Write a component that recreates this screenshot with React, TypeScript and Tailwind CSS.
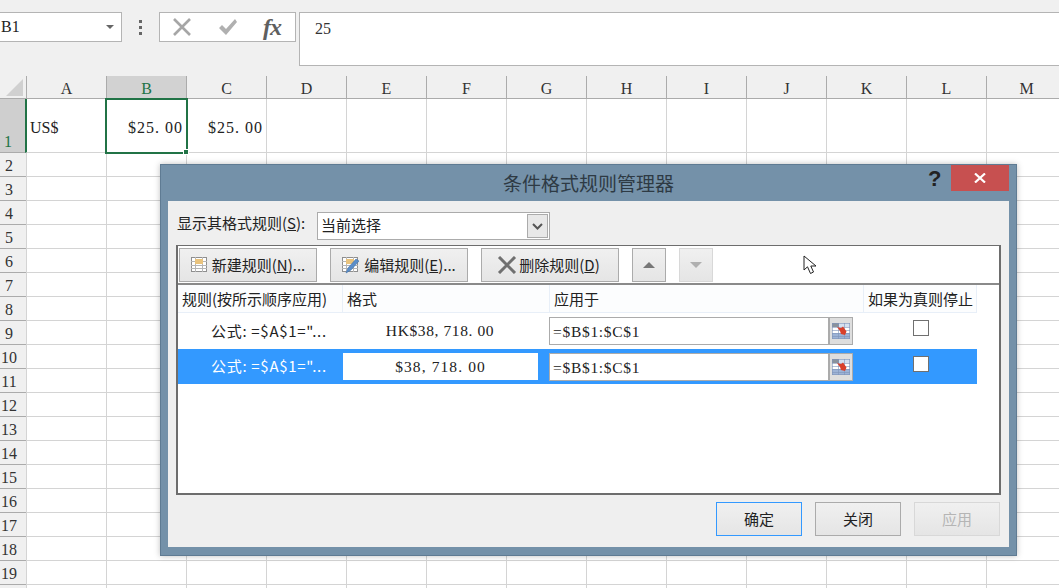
import React from "react";

const cols = ["A","B","C","D","E","F","G","H","I","J","K","L","M"];
const rows = Array.from({length: 19}, (_, i) => i + 2);
const cjk = "font-['Noto_Sans_CJK_SC','Noto_Sans',sans-serif]";
const serif = "font-['Liberation_Serif','Noto_Sans_CJK_SC',serif]";

function RangeIcon() {
  return (
    <svg width="18" height="16" viewBox="0 0 18 16">
      <rect x="0" y="0" width="18" height="16" fill="#fff" />
      <rect x="0" y="0" width="18" height="4" fill="#d4e0f0" />
      <rect x="0" y="0" width="7" height="4" fill="#8a929c" />
      <rect x="0" y="10" width="18" height="6" fill="#9db3d6" />
      <path d="M0 0.5H18M0 4.5H18M0 7.5H18M0 10.5H18M0 13.5H18M0 15.5H18M0.5 0V16M6.5 0V16M12.5 0V16M17.5 0V16" stroke="#8094b8" strokeWidth="0.6" />
      <path d="M5 4L9 5L11 3.5L13.5 7L14.5 8.5L13 12L9 11L8 8Z" fill="#d8402c" />
    </svg>
  );
}

function RuleIcon({ edit }: { edit?: boolean }) {
  return (
    <svg width="18" height="18" viewBox="0 0 18 18">
      <rect x="0.5" y="1.5" width="15" height="14" fill="#fff" stroke="#8f8f8f" />
      <path d="M0 5.5H16M0 9.5H16M0 12.5H16M4.5 1V16M11.5 1V16" stroke="#b5b5b5" />
      <rect x="4" y="3" width="8" height="5" fill="#e9c37d" />
      {edit && <path d="M4 17L6 12L14 3L17 5L9 14Z" fill="#5b8ec9" stroke="#3f6ea8" strokeWidth="0.6" />}
    </svg>
  );
}

function Btn({ className, children }: { className: string; children: React.ReactNode }) {
  return (
    <div className={`h-[34px] flex items-center justify-center border border-[#ababab] bg-gradient-to-b from-[#f0f0f0] to-[#e5e5e5] text-[15px] text-[#222] ${className}`}>
      {children}
    </div>
  );
}

function RangeField() {
  return (
    <div className="w-[304px] h-[28px] flex border border-[#ababab] bg-white">
      <div className={`flex-1 pl-[3px] text-[15.5px] tracking-[0.7px] leading-[27px] text-[#222] ${serif}`}>=$B$1:$C$1</div>
      <div className="w-[24px] h-[26px] bg-[#dedede] border-l-2 border-[#ababab] flex items-center justify-center">
        <RangeIcon />
      </div>
    </div>
  );
}

export default function App() {
  return (
    <div className={`relative w-[1059px] h-[588px] overflow-hidden bg-white ${cjk}`}>
      {/* formula bar */}
      <div className="h-[76px] bg-[#f0f0f0] flex items-start pt-[12px]">
        <div className="w-[123px] h-[30px] -ml-px bg-white border border-[#b4b4b4] flex items-center justify-between pr-[6px]">
          <span className={`text-[16px] pl-px text-[#222] ${serif}`}>B1</span>
          <span className="w-0 h-0 border-l-[4px] border-r-[4px] border-t-[4px] border-l-transparent border-r-transparent border-t-[#666] mr-[1px]" />
        </div>
        <div className="w-[37px] h-[30px] flex flex-col items-center justify-center gap-[3px]">
          <i className="w-[3px] h-[3px] bg-[#666]" />
          <i className="w-[3px] h-[3px] bg-[#666]" />
          <i className="w-[3px] h-[3px] bg-[#666]" />
        </div>
        <div className="w-[137px] h-[30px] bg-white border border-[#b4b4b4] flex items-center">
          <svg width="18" height="18" viewBox="0 0 18 18" className="ml-[13px]">
            <path d="M1 1L17 17M17 1L1 17" stroke="#a6a6a6" strokeWidth="2.6" />
          </svg>
          <svg width="20" height="18" viewBox="0 0 20 18" className="ml-[27px]">
            <path d="M1 10L4 7L8 11L17 1L19 4L8 17Z" fill="#b0b0b0" />
          </svg>
          <span className={`ml-[25px] text-[24px] leading-none font-bold italic tracking-[-1px] text-[#5f5f5f] ${serif}`}>fx</span>
        </div>
        <div className={`ml-[3px] flex-1 h-[54px] bg-white border border-[#b4b4b4] border-r-0 pl-[15px] pt-[4px] text-[16px] text-[#333] ${serif}`}>25</div>
      </div>

      {/* sheet */}
      <div className="w-[1066px] grid grid-cols-[26px_repeat(13,80px)] grid-rows-[23px_54px] auto-rows-[24px]">
        <div className="bg-[#f0f0f0] border-b border-[#ababab] relative overflow-hidden">
          <svg width="17" height="17" viewBox="0 0 17 17" className="absolute right-[3px] bottom-[2px]">
            <path d="M17 0V17H0Z" fill="#d0d0d0" />
          </svg>
        </div>
        {cols.map((c) => (
          <div
            key={c}
            className={`border-l border-b border-[#ababab] text-center text-[16px] leading-[25px] ${serif} ${c === "B" ? "bg-[#d2d2d2] text-[#217346]" : "bg-[#f0f0f0] text-[#333]"}`}
          >
            {c}
          </div>
        ))}

        <div className={`bg-[#cfcfcf] border-b border-[#ababab] text-[16px] pl-[4px] pt-[32px] leading-[22px] text-[#217346] ${serif}`}>1</div>
        {cols.map((c, i) => (
          <div
            key={c}
            className={`border-l border-b border-[#d4d4d4] text-[16px] tracking-[1px] leading-[57px] text-[#222] ${serif} ${i === 0 ? "border-l-2 border-l-[#217346] -ml-px pl-[3px] !tracking-normal" : "text-right pr-[3px]"}`}
          >
            {c === "A" ? "US$" : c === "B" || c === "C" ? "$25. 00" : ""}
          </div>
        ))}

        {rows.map((r) => (
          <React.Fragment key={r}>
            <div className={`bg-[#f0f0f0] border-b border-[#ababab] w-[26px] text-[16px] leading-[25px] text-[#333] pr-[8px] text-center ${serif}`}>{r <= 19 ? r : ""}</div>
            {cols.map((c) => (
              <div key={c} className="border-l border-b border-[#d4d4d4]" />
            ))}
          </React.Fragment>
        ))}
      </div>

      {/* selection */}
      <div className="absolute left-[105px] top-[98px] w-[83px] h-[56px] border-2 border-[#217346]" />
      <div className="absolute left-[183px] top-[149px] w-[6px] h-[6px] bg-[#217346] border border-white" />

      {/* dialog */}
      <div className="absolute left-[160px] top-[164px] w-[857px] h-[392px] bg-[#7491a9] border border-[#5f7b93] shadow-[0_0_6px_rgba(0,0,0,0.25)] flex flex-col">
        <div className="h-[36px] shrink-0 relative flex items-center justify-center">
          <span className="text-[19px] text-[#2e3a44] pt-px">条件格式规则管理器</span>
          <span className="absolute left-[767px] -top-[3px] text-[22px] font-bold text-[#222] font-['Liberation_Sans',sans-serif]">?</span>
          <div className="absolute left-[790px] top-0 w-[58px] h-[26px] bg-[#c75050] flex items-center justify-center">
            <svg width="12" height="10" viewBox="0 0 12 10">
              <path d="M1 0.5L11 9.5M11 0.5L1 9.5" stroke="#fff" strokeWidth="2.2" />
            </svg>
          </div>
        </div>

        <div className="mx-[7px] h-[346px] bg-[#efefef] flex flex-col pl-[8px] pr-[8px]">
          <div className="h-[44px] shrink-0 flex items-center pt-[6px]">
            <span className="w-[141px] mb-[6px] pl-px text-[15px] text-[#222] whitespace-nowrap">显示其格式规则(<u>S</u>):</span>
            <div className="w-[233px] h-[28px] bg-white border border-[#ababab] flex items-center justify-between pl-[3px] pr-px">
              <span className="text-[15px] text-[#222] pb-[2px]">当前选择</span>
              <div className="w-[21px] h-[24px] bg-[#e8e8e8] border border-[#ababab] flex items-center justify-center">
                <svg width="11" height="7" viewBox="0 0 11 7"><path d="M1 1L5.5 5.5L10 1" fill="none" stroke="#555" strokeWidth="2" /></svg>
              </div>
            </div>
          </div>

          <div className="w-[825px] h-[250px] border-2 border-[#6d6d6d] border-t bg-white flex flex-col">
            <div className="h-[39px] shrink-0 border-b-2 border-[#8a8a8a] flex items-start pt-[2px] pl-[1px] gap-[13px]">
              <Btn className="w-[138px] gap-[3px]"><RuleIcon /><span>新建规则(<u>N</u>)...</span></Btn>
              <Btn className="w-[138px] gap-[4px]"><RuleIcon edit /><span>编辑规则(<u>E</u>)...</span></Btn>
              <Btn className="w-[138px] gap-[2px]">
                <svg width="20" height="18" viewBox="0 0 20 18" className="-ml-[3px]"><path d="M2 1L18 17M18 1L2 17" stroke="#707070" strokeWidth="3" /></svg>
                <span>删除规则(<u>D</u>)</span>
              </Btn>
              <Btn className="w-[34px]"><span className="w-0 h-0 border-l-[6px] border-r-[6px] border-b-[6px] border-l-transparent border-r-transparent border-b-[#777]" /></Btn>
              <Btn className="w-[34px] !border-[#d8d8d8]"><span className="w-0 h-0 border-l-[6px] border-r-[6px] border-t-[6px] border-l-transparent border-r-transparent border-t-[#b0b0b0]" /></Btn>
            </div>

            <div className="h-[28px] shrink-0 w-[799px] flex bg-[#fcfdfe] border-b border-[#e8eff8] text-[15px] leading-[27px] text-[#222]">
              <div className="w-[165px] pl-[4px] border-r border-[#e8eff8] whitespace-nowrap">规则(按所示顺序应用)</div>
              <div className="w-[207px] pl-[4px] border-r border-[#e8eff8]">格式</div>
              <div className="w-[314px] pl-[4px] border-r border-[#e8eff8]">应用于</div>
              <div className="flex-1 pl-[4px] border-r border-[#e8eff8] whitespace-nowrap">如果为真则停止</div>
            </div>

            <div className="h-[36px] w-[799px] flex items-center text-[#222]">
              <div className="w-[165px] pl-[33px] text-[15px] tracking-[0.7px] whitespace-nowrap">公式: =$A$1="...</div>
              <div className={`w-[206px] pr-[12px] text-center text-[15.5px] tracking-[0.6px] ${serif}`}>HK$38, 718. 00</div>
              <div className="w-[315px]"><RangeField /></div>
              <div className="flex-1 flex justify-center pb-[6px]">
                <div className="w-[16px] h-[16px] bg-white border border-[#707070]" />
              </div>
            </div>
            <div className="h-[35px] w-[799px] flex items-center bg-[#3399ff] text-white">
              <div className="w-[165px] pl-[33px] text-[15px] tracking-[0.7px] whitespace-nowrap">公式: =$A$1="...</div>
              <div className={`w-[195px] h-[27px] mr-[11px] bg-white text-center text-[15.5px] tracking-[1.1px] leading-[27px] text-[#222] ${serif}`}>$38, 718. 00</div>
              <div className="w-[315px]"><RangeField /></div>
              <div className="flex-1 flex justify-center pb-[5px]">
                <div className="w-[16px] h-[16px] bg-white border border-[#707070]" />
              </div>
            </div>
          </div>

          <div className="flex justify-end gap-[13px] pt-[7px] pr-[1px]">
            <Btn className="w-[86px] !border-[#3399ff]">确定</Btn>
            <Btn className="w-[86px]">关闭</Btn>
            <Btn className="w-[86px] !border-[#d8d8d8] !text-[#b5b5b5]">应用</Btn>
          </div>
        </div>
      </div>

      {/* mouse pointer */}
      <svg width="15" height="20" viewBox="0 0 15 20" className="absolute left-[803px] top-[255px]">
        <path d="M1 1V15L4.5 11.8L7.5 18.5L10.5 17L7.8 11H13Z" fill="#fff" stroke="#222" strokeWidth="1" />
      </svg>
    </div>
  );
}
